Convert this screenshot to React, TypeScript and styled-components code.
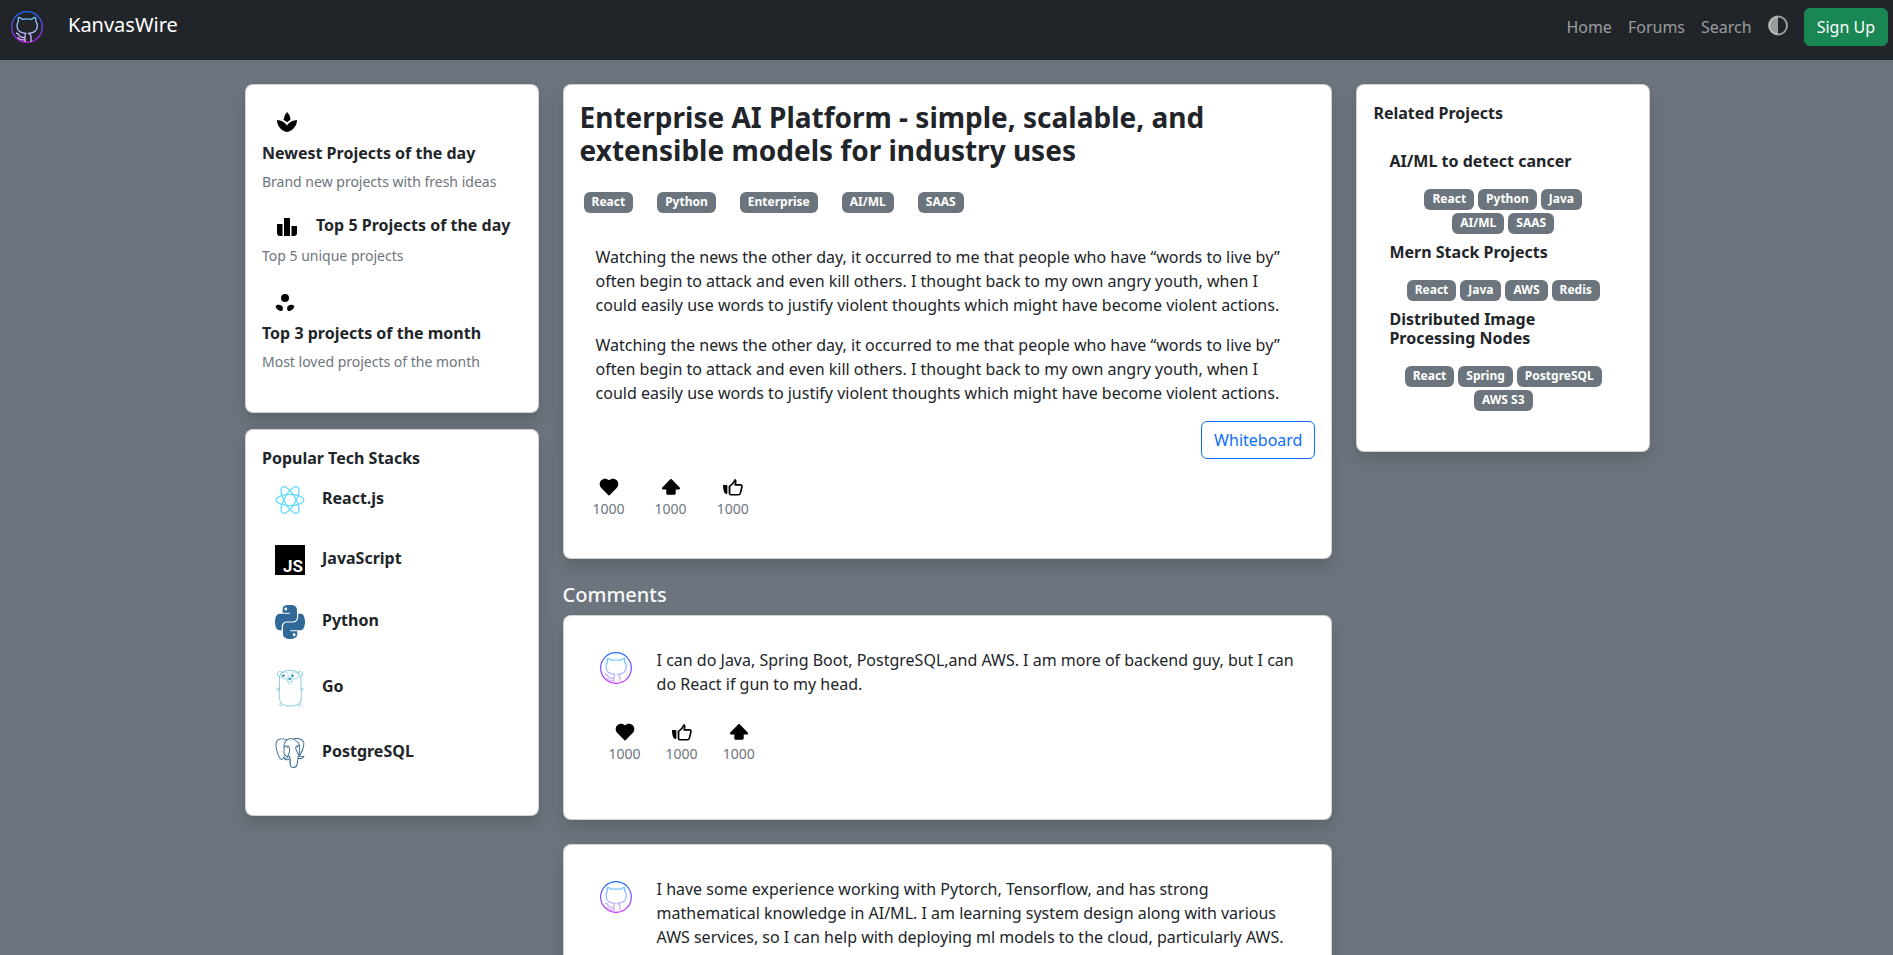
import React, { useId } from 'react';
import styled, { createGlobalStyle } from 'styled-components';
import { MdSpa } from 'react-icons/md';
import { FaPython } from 'react-icons/fa';
import { SiPostgresql } from 'react-icons/si';

const GlobalStyle = createGlobalStyle`
  *, *::before, *::after { box-sizing: border-box; }
  html { background: #6c757d; }
  body {
    margin: 0;
    background: #6c757d;
    color: #212529;
    font: 400 16px/24px 'Noto Sans', 'Liberation Sans', sans-serif;
  }
  h1, h2, h3, p, ul { margin: 0; padding: 0; }
  ul { list-style: none; }
  svg { display: block; }
  button { font: inherit; cursor: pointer; }
`;

const Navbar = styled.header`
  display: flex;
  justify-content: space-between;
  min-height: 60px;
  padding: 8px 5px 8px 11px;
  background: #212529;
`;

const Brand = styled.a`
  display: flex;
  align-items: flex-start;
  gap: 25px;
  color: #fff;
  font-size: 20px;
  line-height: 34px;
  text-decoration: none;

  svg { margin-top: 3px; }
`;

const NavLinks = styled.nav`
  display: flex;
  align-items: flex-start;
  gap: 16px;
`;

const NavLink = styled.a`
  padding: 7px 0;
  color: rgba(255, 255, 255, 0.55);
  text-decoration: none;
`;

const ThemeButton = styled.button`
  padding: 6px 0;
  border: 0;
  background: none;
  color: rgba(255, 255, 255, 0.55);
`;

const Button = styled.button<{ $kind: 'success' | 'outline' }>`
  padding: 6px 12px;
  border: 1px solid ${(p) => (p.$kind === 'success' ? '#198754' : '#0d6efd')};
  border-radius: 6px;
  background: ${(p) => (p.$kind === 'success' ? '#198754' : 'transparent')};
  color: ${(p) => (p.$kind === 'success' ? '#fff' : '#0d6efd')};
  line-height: 24px;
`;

const Page = styled.main`
  padding: 24px 0 24px 2px;
`;

const Columns = styled.div`
  display: grid;
  grid-template-columns: repeat(9, minmax(0, 1fr));
  column-gap: 24px;
  align-items: start;
  width: 74.3%;
  margin: 0 auto;
`;

const Column = styled.div<{ $span: number; $gap: number }>`
  grid-column: span ${(p) => p.$span};
  display: flex;
  flex-direction: column;
  gap: ${(p) => p.$gap}px;
`;

const Card = styled.section<{ $bottom?: number }>`
  padding: 16px 16px ${(p) => p.$bottom ?? 40}px;
  border: 1px solid rgba(0, 0, 0, 0.175);
  border-radius: 8px;
  background: #fff;
  box-shadow: 0 8px 16px rgba(0, 0, 0, 0.15);
`;

const Heading = styled.h2`
  font-size: 16px;
  font-weight: 700;
  line-height: 19px;
`;

const Muted = styled.p`
  color: #6c757d;
  font-size: 14px;
  line-height: 21px;
`;

const FeatureList = styled.ul`
  display: flex;
  flex-direction: column;
  gap: 24px;
  padding-top: 9px;
`;

const FeatureHead = styled.div<{ $inline?: boolean }>`
  display: flex;
  flex-direction: ${(p) => (p.$inline ? 'row' : 'column')};
  gap: ${(p) => (p.$inline ? 17 : 10)}px;
  margin-bottom: ${(p) => (p.$inline ? 5 : 8)}px;

  svg { margin-left: 13px; flex: none; color: #000; }
`;

const StackList = styled.ul`
  display: flex;
  flex-direction: column;
  gap: 30px;
  padding: 17px 0 0 13px;
`;

const StackRow = styled.li`
  display: flex;
  align-items: center;
  gap: 17px;

  h3 { padding-bottom: 4px; }
`;

const PythonLogo = styled(FaPython)`
  width: 30px;
  height: 34px;
  color: #306998;
`;

const Title = styled.h1`
  font-size: 28px;
  font-weight: 700;
  line-height: 33px;
`;

const TagRow = styled.ul<{ $compact?: boolean }>`
  display: flex;
  flex-wrap: wrap;
  justify-content: ${(p) => (p.$compact ? 'center' : 'flex-start')};
  gap: ${(p) => (p.$compact ? '3px 4px' : '8px 24px')};
  padding: ${(p) => (p.$compact ? '0 12px' : '0 4px')};
  margin-top: ${(p) => (p.$compact ? 18 : 25)}px;
`;

const Tag = styled.li`
  padding: 4px 8px 5px;
  border-radius: 6px;
  background: #6c757d;
  color: #fff;
  font-size: 12px;
  font-weight: 700;
  line-height: 12px;
`;

const Prose = styled.div`
  display: flex;
  flex-direction: column;
  gap: 16px;
  padding: 32px 16px 16px;
`;

const Actions = styled.div`
  display: flex;
  justify-content: flex-end;
`;

const Reactions = styled.div<{ $comment?: boolean }>`
  display: flex;
  gap: ${(p) => (p.$comment ? 25 : 30)}px;
  padding: ${(p) => (p.$comment ? '24px 0 0 13px' : '16px 0 0 13px')};
`;

const Reaction = styled.button`
  display: flex;
  flex-direction: column;
  align-items: center;
  padding: 0;
  border: 0;
  background: none;
  color: #6c757d;
  font-size: 14px;
  line-height: 20px;

  svg { color: #000; }
`;

const SectionTitle = styled.h2`
  margin-bottom: -16px;
  color: #f8f9fa;
  font-size: 20px;
  font-weight: 500;
  line-height: 24px;
`;

const CommentBody = styled.div`
  padding: 16px 16px 0;
`;

const CommentText = styled.div`
  display: flex;
  align-items: flex-start;
  gap: 25px;

  svg { flex: none; margin: 4px 0 0 4px; }
`;

const RelatedList = styled.ul`
  display: flex;
  flex-direction: column;
  gap: 9px;
  padding: 29px 16px 0;
`;

const CardHeading = styled(Heading)`
  padding-top: 3px;
`;

function OctocatLogo() {
  const id = useId();
  return (
    <svg width="32" height="32" viewBox="0 0 96 96" fill="none" aria-hidden="true">
      <defs>
        <linearGradient id={`${id}r`} x1="0" y1="0" x2="0" y2="96" gradientUnits="userSpaceOnUse">
          <stop stopColor="#1a6dff" />
          <stop offset="1" stopColor="#c822ff" />
        </linearGradient>
        <linearGradient id={`${id}c`} x1="0" y1="18" x2="0" y2="94" gradientUnits="userSpaceOnUse">
          <stop stopColor="#6dc7ff" />
          <stop offset="1" stopColor="#e6abff" />
        </linearGradient>
      </defs>
      <circle cx="48" cy="48" r="46" stroke={`url(#${id}r)`} strokeWidth="3.5" />
      <g stroke={`url(#${id}c)`} strokeWidth="4" strokeLinejoin="round">
        <path d="M42 93V74c0-3 1-5 3-7-15-1-27-6-27-23 0-6 2-10 4-13-1-4-1-8 1-12 4 0 8 3 11 6 9-2 19-2 28 0 3-3 7-6 11-6 2 4 2 8 1 12 3 3 5 7 5 13 0 17-13 22-27 23 6 2 8 5 8 9v17" />
        <path d="M42 79c-9 2-14-1-17-6-2-4-5-6-10-7M42 86c-12 2-18-1-22-8" />
      </g>
    </svg>
  );
}

const ContrastIcon = () => (
  <svg width="20" height="24" viewBox="0 0 20 24" aria-hidden="true">
    <circle cx="10" cy="11.5" r="9" fill="none" stroke="currentColor" strokeWidth="2" />
    <path d="M10 2.500a9 9 0 0 0 0 18z" fill="currentColor" />
  </svg>
);

const PodiumIcon = () => (
  <svg width="24" height="24" viewBox="0 0 24 24" fill="currentColor" aria-hidden="true">
    <path d="M2 8h5.500v12H5c-1.700 0-3-1.300-3-3zM9 2h6v18H9zM16.500 10H22v7c0 1.700-1.300 3-3 3h-2.500z" />
  </svg>
);

const TrioIcon = () => (
  <svg width="24" height="24" viewBox="0 0 24 24" fill="currentColor" aria-hidden="true">
    <circle cx="10" cy="8" r="4" />
    <path d="M.8 16c1.600-2.200 6.200-1.600 7 1.200v2.300c-.2 1.800-2.600 1.900-4.400.6C1.700 19 .6 17.400.8 16zM19.200 16c-1.600-2.200-6.200-1.600-7 1.200v2.300c.2 1.800 2.600 1.900 4.400.6 1.700-1.100 2.800-2.700 2.600-4.100z" />
  </svg>
);

const HeartIcon = () => (
  <svg width="24" height="24" viewBox="0 0 24 24" fill="currentColor" aria-hidden="true">
    <path d="M12 20.700 4.300 13C2.100 10.700 2.100 7.300 4.200 5.200c2.100-2.100 5.600-2.100 7.800 0 2.200-2.100 5.700-2.100 7.800 0 2.100 2.100 2.100 5.500-.1 7.800z" />
  </svg>
);

const UpvoteIcon = () => (
  <svg width="24" height="24" viewBox="0 0 24 24" fill="currentColor" aria-hidden="true">
    <path d="M11.300 4.200c.4-.4 1-.4 1.400 0l8 8.300c.8.800.3 2-.7 2h-3.300v3.700c0 .9-.6 1.500-1.500 1.500H8.800c-.9 0-1.500-.6-1.500-1.500v-3.700H4c-1 0-1.500-1.200-.7-2z" />
  </svg>
);

const LikeIcon = () => (
  <svg width="24" height="24" viewBox="0 0 24 24" aria-hidden="true">
    <path d="M2 10h4v9c-1.300 0-2.300-.6-2.800-1.800C2.300 15.200 2 12.600 2 10z" fill="currentColor" />
    <path
      d="M8.600 11.400c2.200-1.500 4.200-3.500 5.500-6.500.9.900.9 2.600 0 5h5.300c1.200 0 1.900.8 1.600 1.900l-1.700 6.400c-.3 1-1 1.500-2 1.500H9.600c-.7 0-1-.5-1-1.100z"
      fill="none"
      stroke="currentColor"
      strokeWidth="1.600"
      strokeLinejoin="round"
    />
    <path d="M6.900 10.500v8" stroke="currentColor" strokeWidth=".6" />
  </svg>
);

const ReactLogo = () => (
  <svg width="30" height="30" viewBox="-15 -15 30 30" fill="none" stroke="#61dafb" strokeWidth="1.300" aria-hidden="true">
    <ellipse rx="13.800" ry="5.600" />
    <ellipse rx="15" ry="5.600" transform="rotate(60)" />
    <ellipse rx="15" ry="5.600" transform="rotate(120)" />
  </svg>
);

const JsLogo = () => (
  <svg width="30" height="30" viewBox="0 0 30 30" aria-hidden="true">
    <path d="M0 0h30v30H0z" />
    <text x="28" y="27" fill="#fff" textAnchor="end" fontFamily="Roboto, sans-serif" fontSize="17" fontWeight="700">
      JS
    </text>
  </svg>
);

const GopherLogo = () => (
  <svg width="30" height="39" viewBox="0 0 30 39" fill="none" stroke="#5fb7c9" strokeWidth=".7" aria-hidden="true">
    <path d="M15 1.500C8 1.500 4.800 4 4.500 9c-.3 4 0 7 0 11 0 4-.8 8 .4 11.500C6.500 35.500 10 37 15 37c5.500 0 9.500-1.500 10.800-5 1-3.500.4-8 .2-12-.2-4 .4-8-.2-12C25 3.500 21.500 1.500 15 1.500z" />
    <path d="M5.500 8C3 8 1.600 5.600 2.600 3.800 3.500 2.200 5.800 2 7 3.600M24.600 8c2.500 0 3.700-2.400 2.700-4.200-.9-1.600-3-1.800-4.200-.2M4.400 19c-1.700.2-2.700 1-2.400 1.800.3.600 1.400.4 2.400-.2M26 19c1.500.2 2.500 1 2.200 1.800-.3.600-1.300.4-2.200-.2M5.500 33.500c-.8 1.200-1 2.700-.3 3.200.8.500 1.800-.3 2.500-1.300M24.800 33.500c.8 1.200 1 2.700.3 3.200-.8.500-1.800-.3-2.500-1.300" />
    <path strokeWidth=".5" d="M13.500 6.500a3.700 3.700 0 1 1-7.400 0 3.700 3.700 0 0 1 7.400 0zM23.400 6.500a3.700 3.700 0 1 1-7.400 0 3.700 3.700 0 0 1 7.400 0zM12 11c1-1.500 4.500-1.500 5.600 0 .6 1.400-1.200 1.600-2.800 1.600S11.400 12.400 12 11zM13.200 12.500c-.2 1.800.2 2.500 1.600 2.500s1.800-.7 1.600-2.500" />
    <g fill="#2f95aa" stroke="none">
      <circle cx="8.500" cy="6.800" r="1.300" />
      <circle cx="17.500" cy="6.800" r="1.300" />
      <ellipse cx="14.800" cy="9.800" rx="1.600" ry="1" />
    </g>
  </svg>
);

const reactionIcons = { heart: HeartIcon, upvote: UpvoteIcon, like: LikeIcon };
type ReactionKind = keyof typeof reactionIcons;

function ReactionBar({ kinds, comment }: { kinds: ReactionKind[]; comment?: boolean }) {
  return (
    <Reactions $comment={comment}>
      {kinds.map((kind) => {
        const Icon = reactionIcons[kind];
        return (
          <Reaction key={kind} type="button" aria-label={`${kind}: 1000`}>
            <Icon />
            1000
          </Reaction>
        );
      })}
    </Reactions>
  );
}

function Tags({ names, compact }: { names: string[]; compact?: boolean }) {
  return (
    <TagRow $compact={compact}>
      {names.map((name) => (
        <Tag key={name}>{name}</Tag>
      ))}
    </TagRow>
  );
}

const features = [
  { title: 'Newest Projects of the day', note: 'Brand new projects with fresh ideas', icon: <MdSpa size={24} /> },
  { title: 'Top 5 Projects of the day', note: 'Top 5 unique projects', icon: <PodiumIcon />, inline: true },
  { title: 'Top 3 projects of the month', note: 'Most loved projects of the month', icon: <TrioIcon /> },
];

const stacks = [
  { name: 'React.js', icon: <ReactLogo /> },
  { name: 'JavaScript', icon: <JsLogo /> },
  { name: 'Python', icon: <PythonLogo viewBox="0 32 448 448" preserveAspectRatio="none" /> },
  { name: 'Go', icon: <GopherLogo /> },
  { name: 'PostgreSQL', icon: <SiPostgresql size={30} color="#336791" /> },
];

const related = [
  { title: 'AI/ML to detect cancer', tags: ['React', 'Python', 'Java', 'AI/ML', 'SAAS'] },
  { title: 'Mern Stack Projects', tags: ['React', 'Java', 'AWS', 'Redis'] },
  { title: 'Distributed Image Processing Nodes', tags: ['React', 'Spring', 'PostgreSQL', 'AWS S3'] },
];

const paragraph =
  'Watching the news the other day, it occurred to me that people who have “words to live by” often begin to attack and even kill others. I thought back to my own angry youth, when I could easily use words to justify violent thoughts which might have become violent actions.';

const comments = [
  'I can do Java, Spring Boot, PostgreSQL,and AWS. I am more of backend guy, but I can do React if gun to my head.',
  'I have some experience working with Pytorch, Tensorflow, and has strong mathematical knowledge in AI/ML. I am learning system design along with various AWS services, so I can help with deploying ml models to the cloud, particularly AWS.',
];

export default function App() {
  return (
    <>
      <GlobalStyle />
      <Navbar>
        <Brand href="#">
          <OctocatLogo />
          KanvasWire
        </Brand>
        <NavLinks>
          <NavLink href="#">Home</NavLink>
          <NavLink href="#">Forums</NavLink>
          <NavLink href="#">Search</NavLink>
          <ThemeButton type="button" aria-label="Toggle theme">
            <ContrastIcon />
          </ThemeButton>
          <Button type="button" $kind="success">Sign Up</Button>
        </NavLinks>
      </Navbar>
      <Page>
        <Columns>
          <Column $span={2} $gap={16}>
            <Card>
              <FeatureList>
                {features.map((f) => (
                  <li key={f.title}>
                    <FeatureHead $inline={f.inline}>
                      {f.icon}
                      <Heading>{f.title}</Heading>
                    </FeatureHead>
                    <Muted>{f.note}</Muted>
                  </li>
                ))}
              </FeatureList>
            </Card>
            <Card $bottom={47}>
              <CardHeading>Popular Tech Stacks</CardHeading>
              <StackList>
                {stacks.map((s) => (
                  <StackRow key={s.name}>
                    {s.icon}
                    <Heading as="h3">{s.name}</Heading>
                  </StackRow>
                ))}
              </StackList>
            </Card>
          </Column>

          <Column $span={5} $gap={24}>
            <Card $bottom={39}>
              <Title>Enterprise AI Platform - simple, scalable, and extensible models for industry uses</Title>
              <Tags names={['React', 'Python', 'Enterprise', 'AI/ML', 'SAAS']} />
              <Prose>
                <p>{paragraph}</p>
                <p>{paragraph}</p>
              </Prose>
              <Actions>
                <Button type="button" $kind="outline">Whiteboard</Button>
              </Actions>
              <ReactionBar kinds={['heart', 'upvote', 'like']} />
            </Card>
            <SectionTitle>Comments</SectionTitle>
            {comments.map((text) => (
              <Card key={text} $bottom={55}>
                <CommentBody>
                  <CommentText>
                    <OctocatLogo />
                    <p>{text}</p>
                  </CommentText>
                  <ReactionBar comment kinds={['heart', 'like', 'upvote']} />
                </CommentBody>
              </Card>
            ))}
          </Column>

          <Column $span={2} $gap={24}>
            <Card>
              <CardHeading>Related Projects</CardHeading>
              <RelatedList>
                {related.map((r) => (
                  <li key={r.title}>
                    <Heading as="h3">{r.title}</Heading>
                    <Tags compact names={r.tags} />
                  </li>
                ))}
              </RelatedList>
            </Card>
          </Column>
        </Columns>
      </Page>
    </>
  );
}
